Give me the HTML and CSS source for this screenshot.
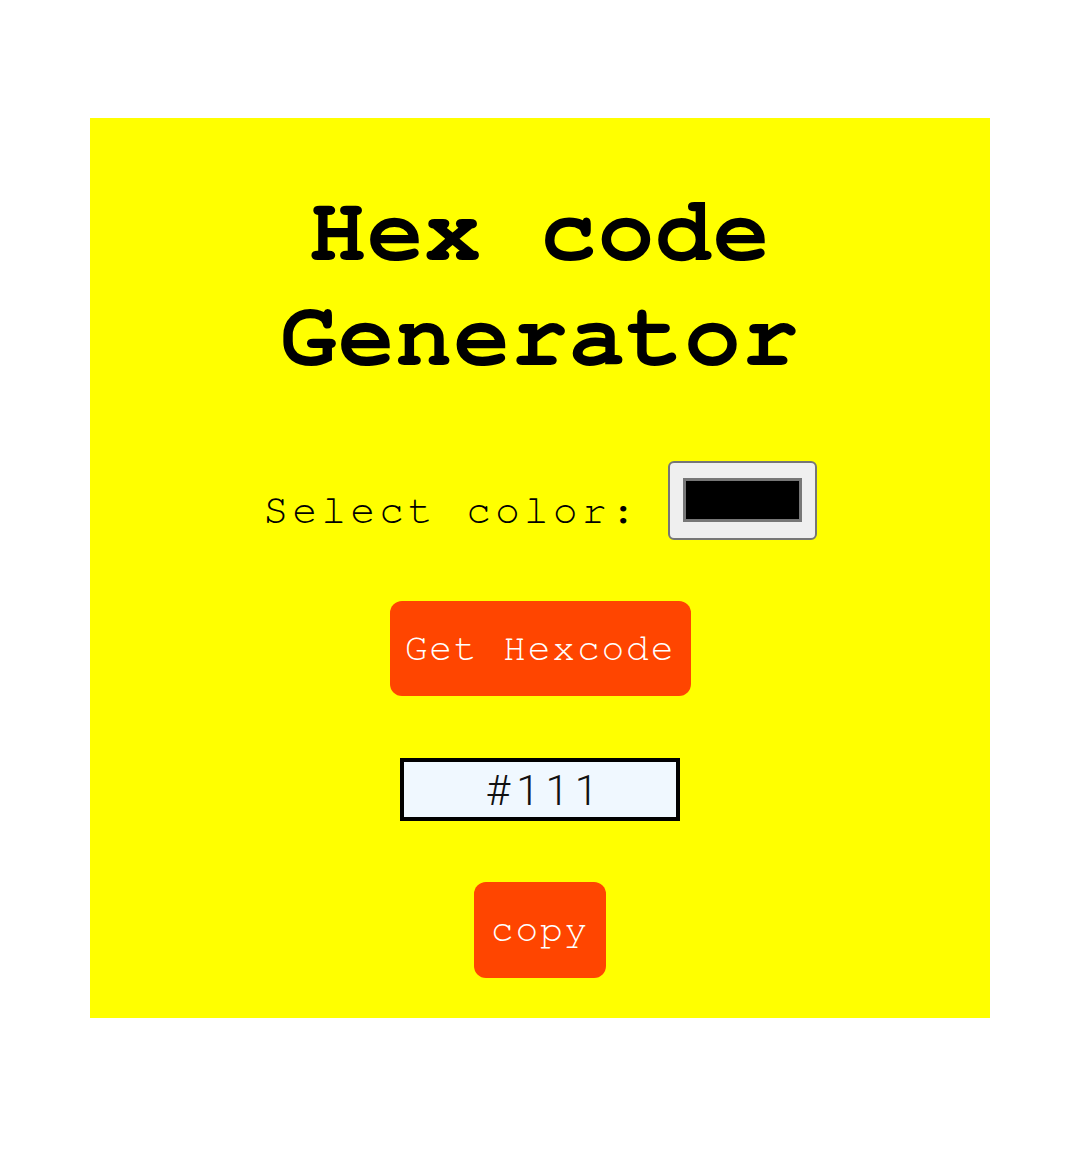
FILE: index.html
```html
<!DOCTYPE html>
<html>
<head>
<meta charset="utf-8">
<link rel="stylesheet" href="styles.css">
</head>
<body>
<div class="card">
  <h1 class="title">Hex code<br>Generator</h1>
  <div class="pick-row">
    <label class="pick-label">Select color:</label>
    <div class="color-input"><div class="swatch"></div></div>
  </div>
  <button class="btn btn-get">Get Hexcode</button>
  <div class="output">#111</div>
  <button class="btn btn-copy">copy</button>
</div>
</body>
</html>
```
FILE: styles.css
```css
body {
  margin: 0;
  background: #ffffff;
}
.card {
  width: 900px;
  height: 900px;
  margin: 118px auto 0;
  background: #ffff00;
  display: flex;
  flex-direction: column;
  align-items: center;
  font-family: FreeMono, "Liberation Mono", monospace;
  box-sizing: border-box;
  padding-top: 62px;
}
.title {
  margin: 0;
  font-family: FreeMono, "Liberation Mono", monospace;
  font-size: 94px;
  line-height: 105px;
  font-weight: bold;
  letter-spacing: 1.3px;
  text-align: center;
  color: #000;
}
.pick-row {
  display: flex;
  align-items: center;
  margin-top: 71px;
  gap: 28px;
}
.pick-label {
  font-size: 41.5px;
  letter-spacing: 4.05px;
  color: #000;
  padding-top: 20px;
}
.color-input {
  width: 149px;
  height: 79px;
  box-sizing: border-box;
  border: 2px solid #767676;
  border-radius: 6px;
  background: #efefef;
  padding: 15px 13px 16px 13px;
}
.swatch {
  width: 100%;
  height: 100%;
  box-sizing: border-box;
  border: 3px solid #777;
  background: #000;
}
.btn {
  border: none;
  background: #ff4500;
  color: #fff;
  font-family: FreeMono, "Liberation Mono", monospace;
  font-size: 38px;
  letter-spacing: 1.8px;
  border-radius: 12px;
  height: 95px;
  padding: 0;
}
.btn-get {
  margin-top: 61px;
  width: 301px;
}
.output {
  margin-top: 62px;
  width: 280px;
  height: 63px;
  box-sizing: border-box;
  border: 4px solid #000;
  background: #f0f8ff;
  text-align: center;
  font-family: Roboto, "Liberation Sans", sans-serif;
  font-weight: 300;
  font-size: 42px;
  line-height: 57px;
  letter-spacing: 6px;
  padding-left: 10px;
  color: #111;
}
.btn-copy {
  margin-top: 61px;
  width: 132px;
  height: 96px;
}
```
